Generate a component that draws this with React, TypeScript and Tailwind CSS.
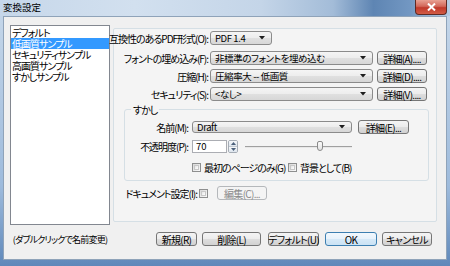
import type { ReactNode } from "react";

const Arrow = () => (
  <svg width="6" height="4" viewBox="0 0 6 4">
    <path d="M0 0h6L3 3.5z" fill="#1e1e1e" />
  </svg>
);

interface ComboProps {
  w: string;
  h?: string;
  text: string;
}

const Combo = ({ w, h = "h-[14px]", text }: ComboProps) => (
  <div
    className={`flex ${h} ${w} shrink-0 items-center justify-between rounded-[3px] border border-[#8b8b8b] bg-[linear-gradient(#f5f5f5_0%,#ededed_50%,#e0e0e0_50%,#d7d7d7_100%)] pl-[4px] pr-[6px]`}
  >
    <span className="whitespace-nowrap text-[9.5px] tracking-[-0.4px]">{text}</span>
    <Arrow />
  </div>
);

interface BtnProps {
  w: string;
  h?: string;
  kind?: "normal" | "primary" | "disabled";
  children: ReactNode;
}

const Btn = ({ w, h = "h-[14px]", kind = "normal", children }: BtnProps) => {
  const look =
    kind === "primary"
      ? "border-[#3c7fb1] bg-[linear-gradient(#f2f8fd_0%,#e7f2fb_50%,#d6e9f7_50%,#cae2f4_100%)]"
      : kind === "disabled"
        ? "border-[#b5b8bb] bg-[#f4f4f4] text-[#8a8a8a]"
        : "border-[#767676] bg-[linear-gradient(#f4f4f4_0%,#ececec_50%,#dedede_50%,#d2d2d2_100%)]";
  return (
    <div
      className={`flex ${h} ${w} shrink-0 items-center justify-center whitespace-nowrap rounded-[3px] border ${look} tracking-[-0.7px]`}
    >
      {children}
    </div>
  );
};

const Check = () => (
  <div className="h-[9px] w-[9px] shrink-0 border border-[#8e8f8f] bg-[linear-gradient(135deg,#d8d8d8,#fafafa)] p-[1px]">
    <div className="h-full w-full border border-[#c8c8c8] bg-[linear-gradient(135deg,#e4e4e4,#ffffff)]" />
  </div>
);

const Label = ({ w, children }: { w: string; children: ReactNode }) => (
  <div className={`flex ${w} shrink-0 justify-end whitespace-nowrap`}>{children}</div>
);

const items = ["デフォルト", "低画質サンプル", "セキュリティサンプル", "高画質サンプル", "すかしサンプル"];

export default function App() {
  return (
    <div className="flex h-[266px] w-[450px] flex-col overflow-hidden bg-[linear-gradient(#c7d8ea,#9ebbdc_70%,#5f88ba)] font-['Noto_Sans_CJK_JP',sans-serif] text-[10px] leading-[11px] tracking-[-1px] text-black [font-feature-settings:'palt']">
      {/* title bar */}
      <div className="flex h-[16px] shrink-0 items-start justify-between bg-[linear-gradient(90deg,#c6d7ea_0%,#d2e0ef_30%,#c4d5e8_58%,#a3bcd8_74%,#5e85b3_83%,#7297c2_91%,#b8cde4_100%)] pl-[3px] pr-[3px]">
        <span className="mt-[2px] text-[9.5px] leading-[11px] tracking-normal">変換設定</span>
        <div className="flex h-[15px] w-[32px] items-center justify-center rounded-b-[4px] border border-t-0 border-[#5e2a24] bg-[linear-gradient(#e8a193_0%,#d2685a_45%,#c0392b_55%,#d25c45_100%)]">
          <svg width="9" height="8" viewBox="0 0 9 8">
            <path d="M1 0.5l7 7M8 0.5l-7 7" stroke="#fff" strokeWidth="2" />
          </svg>
        </div>
      </div>

      {/* client */}
      <div className="mx-[3px] flex h-[244px] shrink-0 flex-col border border-[#8fa3b9] bg-[#f0f0f0] pl-[6px] pt-[8px]">
        <div className="flex gap-[3px]">
          {/* list */}
          <div className="flex h-[200px] w-[100px] shrink-0 flex-col border border-[#828790] bg-white pt-[1px]">
            {items.map((t, i) => (
              <div
                key={t}
                className={`h-[11px] whitespace-nowrap pl-[1px] leading-[11px] ${i === 1 ? "bg-[#3399ff] text-white" : ""}`}
              >
                {t}
              </div>
            ))}
          </div>

          {/* settings panel */}
          <div className="mt-[3px] flex h-[194px] w-[324px] shrink-0 flex-col rounded-[2px] border border-[#d5dfe5] bg-[#f4f4f4] pt-[2px]">
            <div className="flex items-center">
              <Label w="w-[94px]">互換性のあるPDF形式(O):</Label>
              <div className="ml-[2px]">
                <Combo w="w-[62px]" text="PDF 1.4" />
              </div>
            </div>
            <div className="mt-[6px] flex items-center">
              <Label w="w-[94px]">フォントの埋め込み(F):</Label>
              <div className="ml-[2px]">
                <Combo w="w-[163px]" text="非標準のフォントを埋め込む" />
              </div>
              <div className="ml-[4px]">
                <Btn w="w-[50px]">詳細(A)....</Btn>
              </div>
            </div>
            <div className="mt-[4px] flex items-center">
              <Label w="w-[94px]">圧縮(H):</Label>
              <div className="ml-[2px]">
                <Combo w="w-[163px]" text="圧縮率大 -- 低画質" />
              </div>
              <div className="ml-[4px]">
                <Btn w="w-[50px]">詳細(D)....</Btn>
              </div>
            </div>
            <div className="mt-[4px] flex items-center">
              <Label w="w-[94px]">セキュリティ(S):</Label>
              <div className="ml-[2px]">
                <Combo w="w-[163px]" text="<なし>" />
              </div>
              <div className="ml-[4px]">
                <Btn w="w-[50px]">詳細(V)....</Btn>
              </div>
            </div>

            {/* watermark group */}
            <fieldset className="ml-[10px] mt-[3px] w-[305px] rounded-[3px] border border-[#d5dfe5] pb-[7px]">
              <legend className="ml-[6px] px-[2px] leading-[11px]">すかし</legend>
              <div className="mt-[5px] flex items-center">
                <Label w="w-[63px]">名前(M):</Label>
                <div className="ml-[4px]">
                  <Combo w="w-[160px]" h="h-[12px]" text="Draft" />
                </div>
                <div className="ml-[6px]">
                  <Btn w="w-[51px]">詳細(E)...</Btn>
                </div>
              </div>
              <div className="mt-[6px] flex items-center">
                <Label w="w-[63px]">不透明度(P):</Label>
                <div className="ml-[4px] flex h-[13px] w-[35px] items-center border border-[#abadb3] bg-white pl-[3px] text-[9.5px] tracking-normal">
                  70
                </div>
                <div className="ml-[1px] flex h-[13px] w-[10px] flex-col overflow-hidden rounded-[2px] border border-[#a5acb5]">
                  <div className="flex flex-1 items-center justify-center border-b border-[#c3c9d0] bg-[linear-gradient(#f6f8fa,#dde5ee)]">
                    <svg width="5" height="3" viewBox="0 0 5 3">
                      <path d="M0 3h5L2.5 0z" fill="#4a5f7a" />
                    </svg>
                  </div>
                  <div className="flex flex-1 items-center justify-center bg-[linear-gradient(#f6f8fa,#dde5ee)]">
                    <svg width="5" height="3" viewBox="0 0 5 3">
                      <path d="M0 0h5L2.5 3z" fill="#4a5f7a" />
                    </svg>
                  </div>
                </div>
                <div className="relative ml-[7px] flex h-[13px] w-[107px] items-center">
                  <div className="h-[2px] w-full border-t border-[#a0a0a0] bg-[#e8e8e8]" />
                  <div className="absolute left-[72px] top-[1px] h-[10px] w-[6px] rounded-[2px] rounded-b-[3px] border border-[#8a8a8a] bg-[linear-gradient(#fbfbfb,#e2e2e2)]" />
                </div>
              </div>
              <div className="mt-[9px] flex items-center pl-[67px]">
                <div className="flex w-[96px] items-center">
                  <Check />
                  <span className="ml-[3px] whitespace-nowrap">最初のページのみ(G)</span>
                </div>
                <Check />
                <span className="ml-[3px] whitespace-nowrap">背景として(B)</span>
              </div>
            </fieldset>

            <div className="mt-[5px] flex items-center">
              <Label w="w-[83px]">ドキュメント設定(I):</Label>
              <div className="ml-[2px]">
                <Check />
              </div>
              <div className="ml-[9px]">
                <Btn w="w-[50px]" kind="disabled">
                  編集(C)...
                </Btn>
              </div>
            </div>
          </div>
        </div>

        {/* bottom row */}
        <div className="mt-[7px] flex items-center">
          <div className="flex w-[100px] shrink-0 justify-center whitespace-nowrap text-[9px] tracking-[-0.8px]">
            (ダブルクリックで名前変更)
          </div>
          <div className="ml-[46px]">
            <Btn w="w-[41px]">新規(R)</Btn>
          </div>
          <div className="ml-[5px]">
            <Btn w="w-[59px]">削除(L)</Btn>
          </div>
          <div className="ml-[7px]">
            <Btn w="w-[51px]">デフォルト(U)</Btn>
          </div>
          <div className="ml-[6px]">
            <Btn w="w-[52px]" kind="primary">
              OK
            </Btn>
          </div>
          <div className="ml-[5px]">
            <Btn w="w-[50px]">キャンセル</Btn>
          </div>
        </div>
      </div>
    </div>
  );
}
